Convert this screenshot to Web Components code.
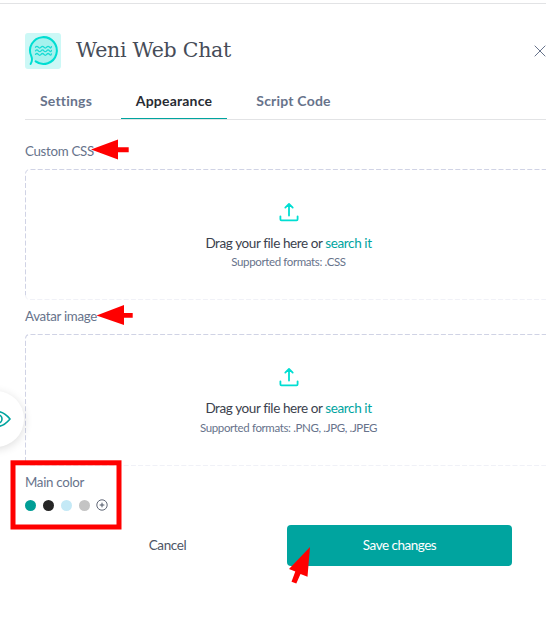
<!DOCTYPE html>
<html lang="en">
<head>
<meta charset="utf-8">
<title>Weni Web Chat</title>
<style>
html,body{margin:0;height:634px;overflow:hidden;background:#fff;font-family:Lato,"Open Sans",sans-serif}
</style>
</head>
<body>
<chat-settings></chat-settings>
<script>
const define=(name,html)=>{
  const t=document.createElement('template');
  t.innerHTML=html;
  customElements.define(name,class extends HTMLElement{
    constructor(){super();this.attachShadow({mode:'open'}).append(t.content.cloneNode(true));}
  });
};

define('chat-logo',`<style>:host{display:block;width:36px;height:36px}svg{display:block}</style>
<svg width="36" height="36" viewBox="0 0 36 36" fill="none" stroke="#00ded2" stroke-linecap="round">
<rect width="36" height="36" rx="3" fill="#ccf8f6" stroke="none"/>
<circle cx="18.4" cy="17.5" r="13.5" fill="#a6f2ee" stroke="none"/>
<path d="M5.6 31C7.3 28.5 7.5 26.2 6.3 23.2A13.4 13.4 0 1 1 10.6 28.4" stroke-width="2"/>
<path d="M10.5 14.2q1.4-1.8 2.8 0t2.8 0t2.8 0t2.8 0t2.8 0t1.9-.5M10.5 17.8q1.4-1.8 2.8 0t2.8 0t2.8 0t2.8 0t2.8 0t1.9-.5M10.5 21.4q1.4-1.8 2.8 0t2.8 0t2.8 0t2.8 0t2.8 0t1.9-.5" stroke="#19dbd4" stroke-width="1.3"/>
</svg>`);

define('dialog-header',`<style>
:host{display:flex;align-items:center;height:36px;padding:29px 0 0 25px;border-top:1px solid #e2e3e5;margin-top:3px}
h1{margin:0 0 0 15px;font:400 20.5px/30px "DejaVu Serif",serif;letter-spacing:-.25px;color:#464c58;white-space:nowrap;padding-bottom:2px;flex:1}
svg{flex:none}
</style><chat-logo></chat-logo><h1><slot></slot></h1>
<svg width="12" height="12" viewBox="0 0 12 12" stroke="#67738b" stroke-width="1"><path d="M.7 .7L11.3 11.3M11.3 .7L.7 11.3"/></svg>`);

define('tab-item',`<style>
:host{display:block;box-sizing:border-box;height:31px;text-align:center;font:700 14px/26px Lato,sans-serif;letter-spacing:.2px;color:#67738b;white-space:nowrap}
:host([active]){color:#272b33;border-bottom:1px solid #00a49f}
</style><slot></slot>`);

define('tab-bar',`<style>
:host{display:grid;grid-template-columns:82px 106px 105px;column-gap:14px;margin:19px 0 0 25px;height:32px;box-shadow:inset 0 -1px #e2e3e5}
</style><slot></slot>`);

define('field-label',`<style>
:host{display:block;font:400 13.3px/20px Lato,sans-serif;letter-spacing:-.3px;color:#67738b;height:20px;white-space:nowrap}
</style><slot></slot>`);

define('upload-icon',`<style>:host{display:block;height:20px}svg{display:block}</style>
<svg width="20" height="20" viewBox="0 0 20 20" fill="none" stroke="#00ded2" stroke-width="1.8" stroke-linecap="round" stroke-linejoin="round">
<path d="M10 13.5V2.2M6.3 5.6L10 1.9L13.7 5.6M1.4 14.3V17.3Q1.4 18.3 2.4 18.3H17.6Q18.6 18.3 18.6 17.3V14.3"/></svg>`);

define('drop-zone',`<style>
:host{display:grid;width:528px;height:131px;margin-top:8px;line-height:20px;white-space:nowrap}
.content{grid-area:1/1;display:flex;flex-direction:column;align-items:center;padding-top:33px}
.prompt{font-size:13.5px;color:#3b414d;margin:11px 1px 0 0;letter-spacing:-.4px}
.prompt span{color:#00a49f}
.formats{font-size:11.5px;line-height:16px;color:#67738b;margin:1px 1px 0 0;letter-spacing:-.37px}
:host([wide]){height:132px}
:host([wide]) .formats{margin-top:2px}
svg{grid-area:1/1;display:block;width:528px;height:100%}
</style>
<svg viewBox="0 0 528 131" preserveAspectRatio="none" fill="none" stroke="#d0d3e5" stroke-dasharray="5 2.2">
<path d="M.5 127V5Q.5 .5 5 .5H523Q527.5 .5 527.5 5V127"/>
<path d="M.5 126Q.5 130.5 5 130.5H523Q527.5 130.5 527.5 126" stroke="#f0f1f7"/></svg>
<div class="content"><upload-icon></upload-icon>
<div class="prompt">Drag your file here or <span>search it</span></div>
<div class="formats">Supported formats: <slot></slot></div></div>`);

define('color-picker',`<style>
:host{display:flex;gap:7px;align-items:center;height:12px;margin-top:7px}
i{width:11px;height:11px;border-radius:50%}svg{display:block;margin-left:-1px}
</style><i style="background:#009e96"></i><i style="background:#262626"></i><i style="background:#c4e9f6"></i><i style="background:#c4c4c4"></i>
<svg width="12" height="12" viewBox="0 0 12 12" fill="none" stroke="#4e5666"><circle cx="6" cy="6" r="5.2" stroke-width=".9"/><path d="M6 3.7V8.3M3.7 6H8.3"/></svg>`);

define('action-button',`<style>
:host{display:block;width:225px;height:41px;text-align:center;border-radius:4px;font:400 13.5px/41px Lato,sans-serif;letter-spacing:-.4px;color:#4e5666}
:host([primary]){background:#00a49f;color:#fff;letter-spacing:-.5px}
</style><slot></slot>`);

define('preview-toggle',`<style>
:host{position:absolute;left:-32px;top:391px;width:56px;height:56px;border-radius:50%;background:#fff;box-shadow:0 2px 10px rgba(0,0,0,.14)}
svg{display:block;margin:17px 0 0 17px}
</style><svg width="26" height="22" viewBox="0 0 26 22" fill="none" stroke="#00a49f" stroke-width="1.6"><path d="M.9 11Q12.5-3.8 25 11Q12.5 25.8 .9 11Z"/><circle cx="13" cy="11" r="4"/></svg>`);

define('red-marks',`<style>
:host{position:absolute;inset:0;pointer-events:none}svg{display:block}
</style><svg width="546" height="634" fill="#f00">
<path d="M91 149.5L118 139.5V147.3H128.7V152.3H118V159.5Z"/>
<path d="M96.5 315.5L124 305V313H132.7V317.7H124V325Z"/>
<rect x="13" y="462.8" width="106" height="64.2" fill="none" stroke="#f00" stroke-width="5"/>
<path d="M310 547L307.5 576.7L300.5 574L296.3 583.5L291.5 581.7L295.3 571.5L289 569Z"/></svg>`);

define('chat-settings',`<style>
:host{display:flow-root;position:relative;width:546px;height:634px;overflow:hidden}
.form{padding:21px 0 0 25px}
.second{margin-top:6px}.third{margin-top:6px}
.actions{display:flex;gap:7px;margin:14px 0 0 55px}
</style>
<dialog-header>Weni Web Chat</dialog-header>
<tab-bar><tab-item>Settings</tab-item><tab-item active>Appearance</tab-item><tab-item>Script Code</tab-item></tab-bar>
<div class="form">
<field-label>Custom CSS</field-label><drop-zone>.CSS</drop-zone>
<field-label class="second">Avatar image</field-label><drop-zone wide>.PNG, .JPG, .JPEG</drop-zone>
<field-label class="third">Main color</field-label><color-picker></color-picker>
</div>
<div class="actions"><action-button>Cancel</action-button><action-button primary>Save changes</action-button></div>
<preview-toggle></preview-toggle><red-marks></red-marks>`);
</script>
</body>
</html>
